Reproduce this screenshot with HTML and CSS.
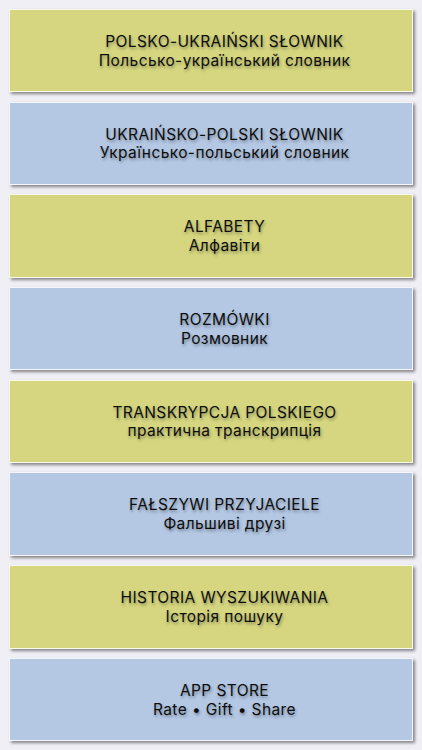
FILE: index.html
```html
<!DOCTYPE html>
<html>
<head>
<meta charset="utf-8">
<link rel="stylesheet" href="styles.css">
</head>
<body>
<div class="list">
  <div class="card yellow"><div class="t1">POLSKO-UKRAIŃSKI SŁOWNIK</div><div class="t2">Польсько-український словник</div></div>
  <div class="card blue"><div class="t1">UKRAIŃSKO-POLSKI SŁOWNIK</div><div class="t2">Українсько-польський словник</div></div>
  <div class="card yellow"><div class="t1">ALFABETY</div><div class="t2">Алфавіти</div></div>
  <div class="card blue"><div class="t1">ROZMÓWKI</div><div class="t2">Розмовник</div></div>
  <div class="card yellow"><div class="t1">TRANSKRYPCJA POLSKIEGO</div><div class="t2">практична транскрипція</div></div>
  <div class="card blue"><div class="t1">FAŁSZYWI PRZYJACIELE</div><div class="t2">Фальшиві друзі</div></div>
  <div class="card yellow"><div class="t1">HISTORIA WYSZUKIWANIA</div><div class="t2">Історія пошуку</div></div>
  <div class="card blue"><div class="t1">APP STORE</div><div class="t2">Rate • Gift • Share</div></div>
</div>
</body>
</html>
```
FILE: styles.css
```css
html, body {
  margin: 0;
  padding: 0;
  background: #efeff5;
  width: 422px;
  height: 750px;
  overflow: hidden;
}
.list {
  display: flex;
  flex-direction: column;
  gap: 9.3px;
  padding: 9px 9px 0 9px;
}
.card {
  height: 83.4px;
  box-sizing: border-box;
  border: 1px solid rgba(255,255,255,0.85);
  box-shadow: 2px 2px 3px rgba(0,0,0,0.45);
  display: flex;
  flex-direction: column;
  justify-content: center;
  align-items: center;
  padding-left: 27px;
  padding-top: 2px;
  font-family: Inter, "Liberation Sans", Arial, sans-serif;
  font-size: 15.5px;
  letter-spacing: 0.4px;
  line-height: 18.7px;
  color: #0d0d0d;
  text-shadow: 1px 2px 3px rgba(0,0,0,0.35);
}
.yellow { background: #d5d67f; }
.blue { background: #b4c8e4; }
```
